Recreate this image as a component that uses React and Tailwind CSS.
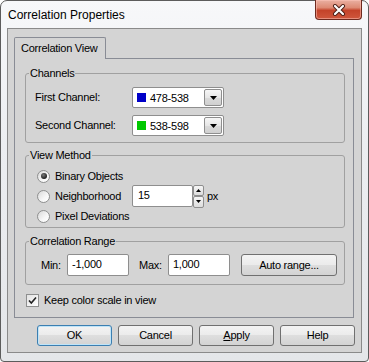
export default function App() {
  return (
    <div className="w-[369px] h-[362px] bg-white font-['Liberation_Sans',Arial,sans-serif] text-[11px] text-black">
      <div className="h-full flex flex-col border border-[#5c5c5c] rounded-t-[7px] rounded-b-[4px] bg-[linear-gradient(#f7f8fa,#eceef1_40%,#e4e6e9)] px-[6px] pb-[8px]">
        <div className="h-[27px] flex items-start justify-between">
          <span className="mt-[7px] ml-[1px] text-[12px] leading-[15px]">Correlation Properties</span>
          <CloseButton />
        </div>

        <div className="flex-1 flex flex-col border border-[#8a8a8a] bg-[#d4d4d4] tracking-[-0.25px]">
          <div className="mt-[8px] ml-[6px] mr-[7px] flex flex-col">
            <div className="flex">
              <div className="relative z-10 -mb-[1px] h-[22px] w-[92px] flex items-center px-[6px] whitespace-nowrap border border-b-0 border-[#898c95] rounded-t-[2px] bg-[#d4d4d4]">
                Correlation View
              </div>
            </div>

            <div className="h-[260px] border border-[#898c95] bg-[#d4d4d4] pl-[10px] pr-[8px] pt-[8px] flex flex-col">
              <Group title="Channels">
                <div className="pl-[9px] pt-[7px] pb-[6px] flex flex-col gap-[7px]">
                  <div className="h-[21px] flex items-center">
                    <span className="w-[97px]">First Channel:</span>
                    <Combo color="bg-[#0000c8]" value="478-538" />
                  </div>
                  <div className="h-[21px] flex items-center">
                    <span className="w-[97px]">Second Channel:</span>
                    <Combo color="bg-[#00c800]" value="538-598" />
                  </div>
                </div>
              </Group>

              <div className="mt-[6px]">
                <Group title="View Method">
                  <div className="pl-[11px] pt-[4px] pb-[1px] flex flex-col">
                    <div className="h-[20px] flex items-center">
                      <Radio checked />
                      <span className="ml-[5px]">Binary Objects</span>
                    </div>
                    <div className="h-[20px] flex items-center">
                      <Radio />
                      <span className="ml-[5px] w-[77px]">Neighborhood</span>
                      <div className="w-[61px] h-[22px] shrink-0 bg-white border border-[#8e8e8e] rounded-[2px] flex items-center pl-[5px] pb-[1px]">
                        15
                      </div>
                      <div className="w-[11px] h-[23px] shrink-0 flex flex-col">
                        <SpinButton up />
                        <SpinButton />
                      </div>
                      <span className="ml-[3px]">px</span>
                    </div>
                    <div className="h-[20px] flex items-center">
                      <Radio />
                      <span className="ml-[5px]">Pixel Deviations</span>
                    </div>
                  </div>
                </Group>
              </div>

              <div className="mt-[7px]">
                <Group title="Correlation Range">
                  <div className="pl-[15px] pt-[6px] pb-[8px] flex items-center">
                    <span className="w-[26px]">Min:</span>
                    <TextBox value="-1,000" />
                    <span className="ml-[10px] w-[29px]">Max:</span>
                    <TextBox value="1,000" />
                    <button className="ml-[11px] w-[96px] h-[22px] border border-[#707070] rounded-[3px] bg-[linear-gradient(#f3f3f3,#ebebeb_50%,#dedede_50%,#d3d3d3)]">
                      Auto range...
                    </button>
                  </div>
                </Group>
              </div>

              <div className="mt-[9px] ml-[1px] h-[13px] flex items-center">
                <CheckBox />
                <span className="ml-[5px]">Keep color scale in view</span>
              </div>
            </div>
          </div>

          <div className="mt-[7px] pr-[6px] flex justify-end gap-[6px]">
            <DialogButton primary>OK</DialogButton>
            <DialogButton>Cancel</DialogButton>
            <DialogButton>
              <span className="underline">A</span>pply
            </DialogButton>
            <DialogButton>Help</DialogButton>
          </div>
        </div>
      </div>
    </div>
  );
}

function CloseButton() {
  return (
    <div className="-mt-[1px] w-[47px] h-[20px] flex items-center justify-center border border-t-0 border-[#6e2a1f] rounded-b-[4px] bg-[linear-gradient(#eab0a2,#dd8a74_40%,#c4432a_55%,#cf573d)] shadow-[inset_0_0_0_1px_rgba(255,200,190,0.5)]">
      <svg width="14" height="12" viewBox="0 0 14 12">
        <path d="M3 2l8 8M11 2l-8 8" stroke="#4a1d15" strokeWidth="4" strokeLinecap="round" />
        <path d="M3 2l8 8M11 2l-8 8" stroke="#ffffff" strokeWidth="2.2" strokeLinecap="round" />
      </svg>
    </div>
  );
}

function Group({ title, children }) {
  return (
    <fieldset className="border border-[#a0a0a0] rounded-[3px]">
      <legend className="ml-[3px] px-[1px] leading-[13px]">{title}</legend>
      {children}
    </fieldset>
  );
}

function Combo({ color, value }) {
  return (
    <div className="w-[92px] h-[21px] shrink-0 bg-white border border-[#8e8e8e] rounded-[2px] flex items-center pl-[4px] pr-[1px]">
      <span className={"w-[9px] h-[9px] shrink-0 " + color} />
      <span className="ml-[4px] flex-1 pt-[1px]">{value}</span>
      <span className="w-[18px] h-[17px] border border-[#8e8e8e] rounded-[2px] bg-[linear-gradient(#f6f6f6,#e6e6e6_50%,#dadada_50%,#d0d0d0)] flex items-center justify-center">
        <svg width="7" height="4" viewBox="0 0 7 4">
          <path d="M0 0h7L3.5 4z" fill="#000" />
        </svg>
      </span>
    </div>
  );
}

function SpinButton({ up }) {
  return (
    <span className="flex-1 border border-[#8e8e8e] rounded-[2px] bg-[linear-gradient(#f6f6f6,#dcdcdc)] flex items-center justify-center">
      <svg width="5" height="3" viewBox="0 0 5 3">
        <path d={up ? "M0 3h5L2.5 0z" : "M0 0h5L2.5 3z"} fill="#000" />
      </svg>
    </span>
  );
}

function Radio({ checked }) {
  return (
    <span className="w-[13px] h-[13px] shrink-0 rounded-full border border-[#8e8f8f] bg-[linear-gradient(135deg,#d9d9d9,#f7f7f7_60%,#ffffff)] flex items-center justify-center">
      {checked && <span className="w-[6px] h-[6px] rounded-full bg-[radial-gradient(circle_at_40%_35%,#7a7a7a,#1f1f1f_70%)]" />}
    </span>
  );
}

function TextBox({ value }) {
  return (
    <div className="w-[62px] h-[22px] shrink-0 bg-white border border-[#8e8e8e] rounded-[2px] flex items-center pl-[4px] pb-[1px]">
      {value}
    </div>
  );
}

function CheckBox() {
  return (
    <span className="w-[13px] h-[13px] shrink-0 border border-[#8e8f8f] bg-[linear-gradient(135deg,#e2e2e2,#ffffff)] flex items-center justify-center">
      <svg width="9" height="9" viewBox="0 0 9 9">
        <path d="M1 4.5l2.3 2.5L8 1.5" stroke="#222" strokeWidth="1.6" fill="none" />
      </svg>
    </span>
  );
}

function DialogButton({ primary, children }) {
  return (
    <button
      className={
        "w-[75px] h-[21px] rounded-[3px] border bg-[linear-gradient(#f3f3f3,#ebebeb_50%,#dedede_50%,#d3d3d3)] " +
        (primary ? "border-[#3c7fb1] shadow-[inset_0_0_0_1px_#bfe4f8]" : "border-[#707070]")
      }
    >
      {children}
    </button>
  );
}
